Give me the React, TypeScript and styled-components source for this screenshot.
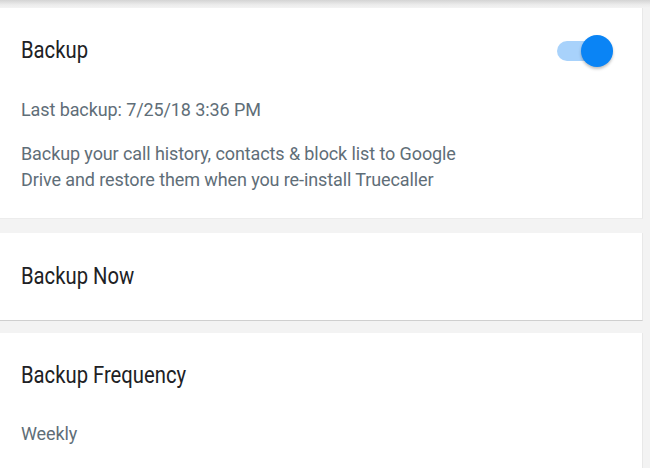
import styled, { createGlobalStyle } from "styled-components";

const GlobalStyle = createGlobalStyle`
  html, body {
    margin: 0;
    padding: 0;
    background: #f2f2f2;
    font-family: Roboto, "Noto Sans", Arial, sans-serif;
    -webkit-font-smoothing: antialiased;
  }
`;

const Page = styled.div`
  display: flex;
  flex-direction: column;
  width: 650px;
  height: 468px;
  overflow: hidden;
  background: #f3f3f3;
`;

const TopShadow = styled.div`
  flex-shrink: 0;
  height: 8px;
  background: linear-gradient(#d4d4d4, #ececec 60%, #f3f3f3);
`;

const Card = styled.section<{ $gap: number; $divider?: boolean }>`
  flex-shrink: 0;
  display: flex;
  flex-direction: column;
  width: 643px;
  margin-top: ${({ $gap }) => $gap}px;
  background: #ffffff;
  border-right: 1px solid #e8e8e8;
  border-bottom: 1px solid ${({ $divider }) => ($divider ? "#cfcfcf" : "#ececec")};
  box-sizing: border-box;
  padding: 0 21px;
`;

const HeaderRow = styled.div<{ $top: number; $bottom: number }>`
  display: flex;
  align-items: center;
  justify-content: space-between;
  padding-top: ${({ $top }) => $top}px;
  padding-bottom: ${({ $bottom }) => $bottom}px;
`;

// screenshot text is slightly condensed horizontally
const Title = styled.div`
  font-size: 23px;
  line-height: 28px;
  color: #202124;
  transform: scaleX(0.88);
  transform-origin: left center;
`;

const Sub = styled.div<{ $bottom: number }>`
  font-size: 18px;
  line-height: 26px;
  letter-spacing: -0.1px;
  color: #5f6e78;
  padding-bottom: ${({ $bottom }) => $bottom}px;
`;

const Toggle = styled.div`
  position: relative;
  width: 56px;
  height: 30px;
  margin-right: 8px;
`;

const Track = styled.div`
  position: absolute;
  left: 0;
  top: 5px;
  width: 50px;
  height: 20px;
  border-radius: 10px;
  background: #a8d2fb;
`;

const Thumb = styled.div`
  position: absolute;
  right: 0;
  top: -1px;
  width: 32px;
  height: 32px;
  border-radius: 50%;
  background: #0a84f5;
  box-shadow: 0 2px 3px rgba(0, 0, 0, 0.25);
`;

export default function App() {
  return (
    <Page>
      <GlobalStyle />
      <TopShadow />
      <Card $gap={0}>
        <HeaderRow $top={28} $bottom={31}>
          <Title>Backup</Title>
          <Toggle>
            <Track />
            <Thumb />
          </Toggle>
        </HeaderRow>
        <Sub $bottom={18}>Last backup: 7/25/18 3:36 PM</Sub>
        <Sub $bottom={25}>
          Backup your call history, contacts &amp; block list to Google
          <br />
          Drive and restore them when you re-install Truecaller
        </Sub>
      </Card>
      <Card $gap={14} $divider>
        <HeaderRow $top={30} $bottom={29}>
          <Title>Backup Now</Title>
        </HeaderRow>
      </Card>
      <Card $gap={12}>
        <HeaderRow $top={29} $bottom={31}>
          <Title>Backup Frequency</Title>
        </HeaderRow>
        <Sub $bottom={30}>Weekly</Sub>
      </Card>
    </Page>
  );
}
